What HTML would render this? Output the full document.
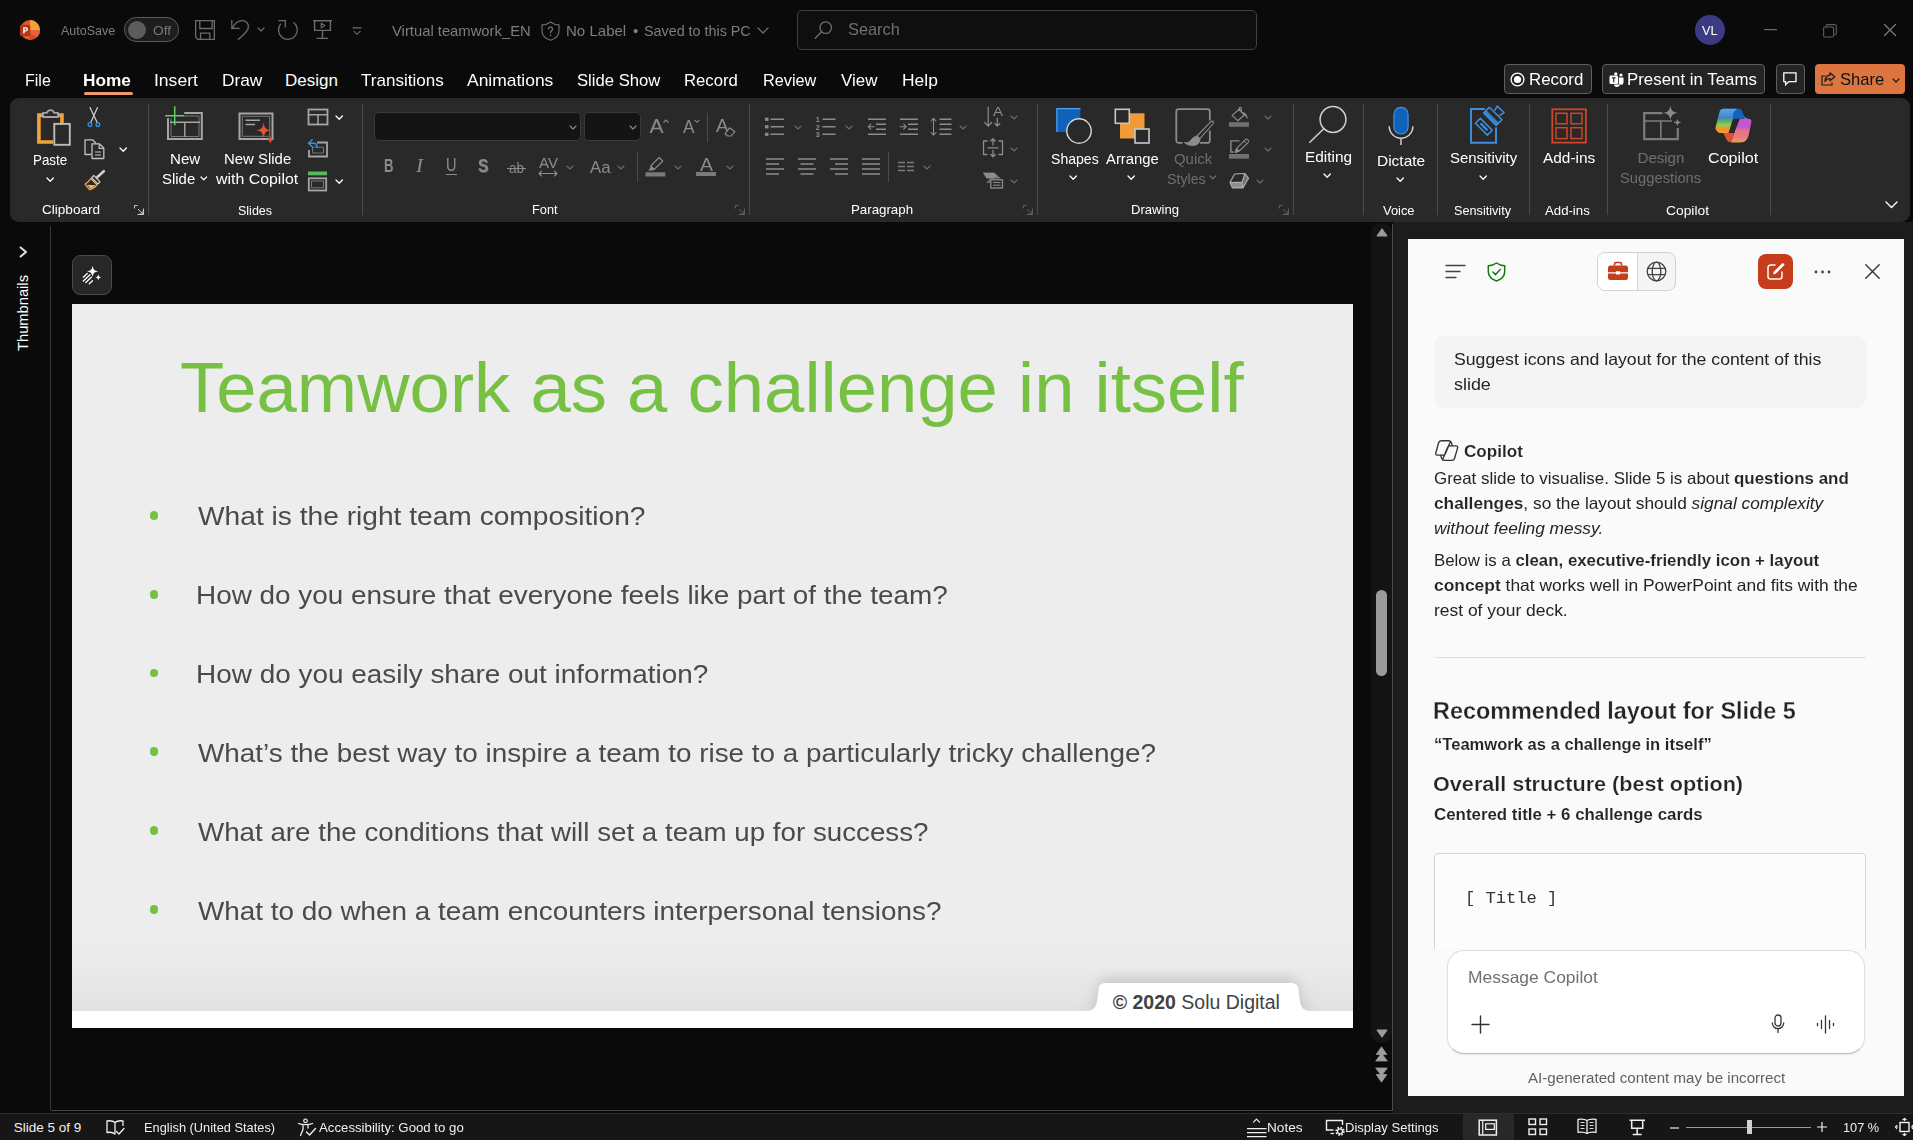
<!DOCTYPE html>
<html><head><meta charset="utf-8"><title>PowerPoint</title>
<style>
html,body{margin:0;padding:0;background:#0a0a0a;overflow:hidden;}
body{width:1913px;height:1140px;position:relative;overflow:hidden;font-family:"Liberation Sans",sans-serif;}
.t{position:absolute;white-space:nowrap;transform-origin:0 50%;line-height:1;}
.m{font-family:"Liberation Mono",monospace;}
svg{overflow:visible}
.sc{font-weight:bold;-webkit-text-stroke:.006em #fafafa;}
.sb{font-weight:bold;-webkit-text-stroke:.012em #fafafa;}
</style></head><body>
<svg style="position:absolute;left:19.8px;top:19.8px;" width="20" height="20" viewBox="0 0 20 20" fill="none"><circle cx="10" cy="10" r="10" fill="#e4572e"/>
<path d="M10 0A10 10 0 0 1 20 10H10Z" fill="#f2a23a"/>
<path d="M20 10A10 10 0 0 1 10 20V10Z" fill="#d04a24"/>
<path d="M10 10H20A10 10 0 0 1 17 17L10 14Z" fill="#e8633a"/>
<rect x="0" y="4.800" width="10.300" height="11.200" rx="1.200" fill="#b5351a"/>
<path d="M3.200 7.300h2.500c1.500 0 2.300.8 2.300 2s-.9 2.100-2.400 2.100H4.600v2.100H3.200Zm1.400 1.100v1.900h.9c.7 0 1.100-.3 1.100-1s-.4-.9-1.100-.9Z" fill="#fff"/></svg>
<span class="t" style="left:60.52px;top:24.0px;font-size:13px;color:#7e7e7e;transform:scaleX(0.9621);">AutoSave</span>
<div style="position:absolute;left:124.2px;top:17.2px;width:54.6px;height:24.4px;box-sizing:border-box;border:1px solid #5c5c5c;border-radius:12.2px;background:#1d1d1d"></div>
<div style="position:absolute;left:128.2px;top:20.6px;width:18px;height:18px;border-radius:50%;background:#5c5c5c"></div>
<span class="t" style="left:153.22px;top:24.0px;font-size:13px;color:#787878;transform:scaleX(1.0544);">Off</span>
<svg style="position:absolute;left:194.9px;top:19.9px;" width="20" height="20" viewBox="0 0 20 20" fill="none"><path d="M.65 .65H19.350V19.350H3L.65 17Z M4.800 .65V8.500H17.200V.65 M5.500 19.350V13.200H14.800V19.350" stroke="#6c6c6c" stroke-width="1.300" stroke-linejoin="miter"/></svg>
<svg style="position:absolute;left:230.9px;top:19.9px;" width="19" height="21" viewBox="0 0 19 21" fill="none"><path d="M.8 0V8.400H8.700 M1.300 8C4 3 8 .4 12 .7C16 1 18.500 5 17 9C16 12 11 16 6.800 19.800" stroke="#6c6c6c" stroke-width="1.300" stroke-linejoin="miter"/></svg>
<svg style="position:absolute;left:257.3px;top:27.1px;" width="8" height="5.5" viewBox="0 0 8 5.5" fill="none"><path d="M1 1 L4 4 L7 1" stroke="#6c6c6c" stroke-width="1.2" stroke-linecap="round" stroke-linejoin="round"/></svg>
<svg style="position:absolute;left:277.9px;top:19.9px;" width="20" height="20" viewBox="0 0 20 20" fill="none"><path d="M15.300 2.200A9.400 9.400 0 1 1 2.800 3.740 M.3 .6H7.300V7.600" stroke="#6c6c6c" stroke-width="1.300"/></svg>
<svg style="position:absolute;left:313px;top:19.9px;" width="20" height="20" viewBox="0 0 20 20" fill="none"><path d="M0 .7H19 M1.600 .7V10.400H17.400V.7 M9.500 10.400V18 M3.500 18.400H15" stroke="#6c6c6c" stroke-width="1.400"/><path d="M8.200 3.300V7.800L12 5.550Z" stroke="#6c6c6c" stroke-width="1.100" stroke-linejoin="round"/></svg>
<svg style="position:absolute;left:352.2px;top:26.5px;" width="10" height="9" viewBox="0 0 10 9" fill="none"><path d="M.5 .9H9.500 M1.500 3.800L5 7.300L8.500 3.800" stroke="#6c6c6c" stroke-width="1.100"/></svg>
<span class="t" style="left:392.1px;top:23.0px;font-size:15px;color:#7e7e7e;transform:scaleX(0.9863);">Virtual teamwork_EN</span>
<svg style="position:absolute;left:541px;top:20.5px;" width="19" height="20" viewBox="0 0 19 20" fill="none"><path d="M9.5 1C12 3 15 3.8 18 3.8V10C18 14.5 14.5 17.6 9.5 19.3C4.500 17.6 1 14.5 1 10V3.8C4 3.8 7 3 9.500 1Z" stroke="#6c6c6c" stroke-width="1.2" stroke-linejoin="round"/><path d="M7.5 8A2 2 0 1 1 10.6 9.7C9.800 10.3 9.500 10.7 9.500 11.800" stroke="#7e7e7e" stroke-width="1.2" stroke-linecap="round"/><circle cx="9.5" cy="14.3" r=".8" fill="#7e7e7e"/></svg>
<span class="t" style="left:565.6px;top:23.0px;font-size:15px;color:#7e7e7e;transform:scaleX(1.0026);">No Label</span>
<span class="t" style="left:633px;top:23.0px;font-size:15px;color:#7e7e7e;">•</span>
<span class="t" style="left:644.1px;top:23.0px;font-size:15px;color:#7e7e7e;transform:scaleX(0.9549);">Saved to this PC</span>
<svg style="position:absolute;left:756.8px;top:27.0px;" width="12" height="7.5" viewBox="0 0 12 7.5" fill="none"><path d="M1 1 L6 6 L11 1" stroke="#6c6c6c" stroke-width="1.3" stroke-linecap="round" stroke-linejoin="round"/></svg>
<div style="position:absolute;left:797px;top:10px;width:460px;height:40px;box-sizing:border-box;border:1px solid #404040;border-radius:5px;background:#0f0f0f"></div>
<svg style="position:absolute;left:814px;top:20px;" width="19" height="19" viewBox="0 0 19 19" fill="none"><circle cx="11.700" cy="7.600" r="5.800" stroke="#6c6c6c" stroke-width="1.300"/><path d="M7.600 11.700L1.200 18.200" stroke="#6c6c6c" stroke-width="1.300" stroke-linecap="round"/></svg>
<span class="t" style="left:848.01px;top:21.2px;font-size:16.5px;color:#707070;transform:scaleX(0.9912);">Search</span>
<div style="position:absolute;left:1694.5px;top:15px;width:30px;height:30px;border-radius:50%;background:#3c3a82"></div>
<span class="t" style="left:1702px;top:25.0px;font-size:12px;color:#fff;transform:scaleX(1.0553);">VL</span>
<svg style="position:absolute;left:1764px;top:28.5px;" width="13" height="1.4" viewBox="0 0 13 1.4" fill="none"><rect width="13" height="1.2" fill="#6d6d6d"/></svg>
<svg style="position:absolute;left:1823px;top:23.5px;" width="14" height="14" viewBox="0 0 14 14" fill="none"><rect x=".6" y="3" width="10" height="10" rx="1.5" stroke="#5d5d5d" stroke-width="1.1"/><path d="M3.2 3V2A1.500 1.500 0 0 1 4.700 .6H11.500A1.800 1.800 0 0 1 13.300 2.400V9.300A1.500 1.500 0 0 1 11.800 10.800H10.800" stroke="#5d5d5d" stroke-width="1.1"/></svg>
<svg style="position:absolute;left:1884.2px;top:24px;" width="12" height="12" viewBox="0 0 12 12" fill="none"><path d="M.5 .5L11.500 11.500 M11.500 .5L.5 11.500" stroke="#7c7c7c" stroke-width="1.200" stroke-linecap="round"/></svg>
<span class="t" style="left:24.98px;top:72.0px;font-size:17px;color:#fff;transform:scaleX(0.9436);">File</span>
<span class="t" style="left:83.48px;top:72.0px;font-size:17px;color:#fff;transform:scaleX(1.0132);"><b>Home</b></span>
<span class="t" style="left:153.98px;top:72.0px;font-size:17px;color:#fff;transform:scaleX(1.0312);">Insert</span>
<span class="t" style="left:221.98px;top:72.0px;font-size:17px;color:#fff;transform:scaleX(1.0173);">Draw</span>
<span class="t" style="left:284.98px;top:72.0px;font-size:17px;color:#fff;">Design</span>
<span class="t" style="left:360.98px;top:72.0px;font-size:17px;color:#fff;transform:scaleX(1.0042);">Transitions</span>
<span class="t" style="left:466.98px;top:72.0px;font-size:17px;color:#fff;transform:scaleX(1.0268);">Animations</span>
<span class="t" style="left:576.98px;top:72.0px;font-size:17px;color:#fff;transform:scaleX(0.9800);">Slide Show</span>
<span class="t" style="left:683.98px;top:72.0px;font-size:17px;color:#fff;transform:scaleX(0.9826);">Record</span>
<span class="t" style="left:762.98px;top:72.0px;font-size:17px;color:#fff;transform:scaleX(0.9571);">Review</span>
<span class="t" style="left:841.48px;top:72.0px;font-size:17px;color:#fff;transform:scaleX(0.9949);">View</span>
<span class="t" style="left:901.98px;top:72.0px;font-size:17px;color:#fff;transform:scaleX(1.0255);">Help</span>
<div style="position:absolute;left:84px;top:92px;width:49px;height:3px;background:#ec9a6e;border-radius:1.5px"></div>
<div style="position:absolute;left:1504px;top:63.9px;width:88px;height:30.1px;box-sizing:border-box;border:1px solid #5f5f5f;border-radius:4px;background:#242424"></div>
<svg style="position:absolute;left:1510px;top:72px;" width="15" height="15" viewBox="0 0 15 15" fill="none"><circle cx="7.5" cy="7.5" r="6.4" stroke="#fff" stroke-width="1.3"/><circle cx="7.500" cy="7.500" r="3.600" fill="#fff"/></svg>
<span class="t" style="left:1528.98px;top:71.0px;font-size:17px;color:#fff;transform:scaleX(0.9917);">Record</span>
<div style="position:absolute;left:1602px;top:63.9px;width:163px;height:30.1px;box-sizing:border-box;border:1px solid #5f5f5f;border-radius:4px;background:#242424"></div>
<svg style="position:absolute;left:1608.5px;top:72px;" width="15" height="15" viewBox="0 0 15 15" fill="none"><rect x=".5" y="3.5" width="8.500" height="8.500" rx="1.200" fill="#fff"/><path d="M3 5.800H6.500M4.750 5.800V10.300" stroke="#242424" stroke-width="1.200"/><circle cx="6.800" cy="1.800" r="1.600" fill="#fff"/><circle cx="12" cy="3" r="1.600" fill="#fff"/><path d="M10 5.500H14.500V10.500A2.250 2.250 0 0 1 10 10.500Z" fill="#fff"/><path d="M5 13V12.500H9.800V5.500H10.500V11A2.750 2.750 0 0 1 5 13Z" fill="#fff"/></svg>
<span class="t" style="left:1626.98px;top:71.0px;font-size:17px;color:#fff;transform:scaleX(0.9911);">Present in Teams</span>
<div style="position:absolute;left:1775.5px;top:63.9px;width:29.3px;height:30.1px;box-sizing:border-box;border:1px solid #5f5f5f;border-radius:4px;background:#242424"></div>
<svg style="position:absolute;left:1782.8px;top:72px;" width="14" height="14" viewBox="0 0 14 14" fill="none"><path d="M.8 .8H13V9.600H5.800L2.600 12.800V9.600H.8Z" stroke="#fff" stroke-width="1.300" stroke-linejoin="miter"/></svg>
<div style="position:absolute;left:1815px;top:64px;width:90px;height:30px;border-radius:4px;background:#dc7540"></div>
<svg style="position:absolute;left:1821px;top:72px;" width="15" height="14" viewBox="0 0 15 14" fill="none"><path d="M4.500 4H1V13H11V10.500" stroke="#1a1a1a" stroke-width="1.200"/><path d="M9 .8L13.800 4.800L9 8.800V6.500C6.500 6.500 5 7.500 4 9.500C4.200 5.800 6 3.500 9 3.200Z" stroke="#1a1a1a" stroke-width="1.200" stroke-linejoin="round"/></svg>
<span class="t" style="left:1839.98px;top:71.0px;font-size:17px;color:#111;transform:scaleX(0.9776);">Share</span>
<svg style="position:absolute;left:1892px;top:77.5px;" width="8" height="5.5" viewBox="0 0 8 5.5" fill="none"><path d="M1 1 L4 4 L7 1" stroke="#1a1a1a" stroke-width="1.2" stroke-linecap="round" stroke-linejoin="round"/></svg>
<div style="position:absolute;left:10px;top:98px;width:1900px;height:123.7px;background:#292929;border-radius:9px"></div>
<svg style="position:absolute;left:35px;top:106px;" width="38" height="42" viewBox="0 0 38 42" fill="none"><path d="M8 9.100H3.900V35.950H18" stroke="#f1a23a" stroke-width="3.600" stroke-linejoin="miter"/>
<path d="M22 9.100H26.950V17" stroke="#f1a23a" stroke-width="3.600"/>
<path d="M8 11V6.800H12A3.600 3.600 0 0 1 19 6.800H23V11Z" stroke="#a4a4a4" stroke-width="1.800" fill="#292929" stroke-linejoin="round"/>
<rect x="19.300" y="17.900" width="15.500" height="20.900" stroke="#bdbdbd" stroke-width="1.900" fill="#292929"/></svg>
<span class="t" style="left:33.1px;top:152.0px;font-size:15px;color:#fff;transform:scaleX(0.8916);">Paste</span>
<svg style="position:absolute;left:45.8px;top:176.9px;" width="8.4" height="5.7" viewBox="0 0 8.4 5.7" fill="none"><path d="M1 1 L4.2 4.2 L7.4 1" stroke="#fff" stroke-width="1.3" stroke-linecap="round" stroke-linejoin="round"/></svg>
<svg style="position:absolute;left:87px;top:107px;" width="15" height="21" viewBox="0 0 15 21" fill="none"><path d="M3 .5L10.300 15.800 M10.500 .5L3.600 15.800" stroke="#d4d4d4" stroke-width="1.200" stroke-linecap="round"/>
<circle cx="3" cy="17.600" r="1.900" stroke="#3b8ede" stroke-width="1.300"/><circle cx="10.900" cy="17.600" r="1.900" stroke="#3b8ede" stroke-width="1.300"/></svg>
<svg style="position:absolute;left:84px;top:139px;" width="21" height="21" viewBox="0 0 21 21" fill="none"><path d="M7 15.500H1V.8H8.500L12 4.300" stroke="#c2c2c2" stroke-width="1.300" stroke-linejoin="round"/>
<path d="M8 4.800H15.500L19.800 9V19.500H8Z" stroke="#c2c2c2" stroke-width="1.300" fill="#292929" stroke-linejoin="round"/><path d="M15.200 5V9.300H19.500 M11 13H17 M11 16H17" stroke="#c2c2c2" stroke-width="1.200"/></svg>
<svg style="position:absolute;left:119.2px;top:146.9px;" width="8.4" height="5.7" viewBox="0 0 8.4 5.7" fill="none"><path d="M1 1 L4.2 4.2 L7.4 1" stroke="#fff" stroke-width="1.3" stroke-linecap="round" stroke-linejoin="round"/></svg>
<svg style="position:absolute;left:84px;top:170px;" width="22" height="21" viewBox="0 0 22 21" fill="none"><path d="M19.800 1.200L13.200 7.200" stroke="#d0d0d0" stroke-width="2.600" stroke-linecap="round"/>
<path d="M9.800 5.500L16 11.800L13.800 14L7.600 7.700Z" stroke="#d0d0d0" stroke-width="1.200" stroke-linejoin="round"/>
<path d="M6.800 8.500L13 14.800C11 17.500 8.500 19 5.500 19.600L1 14.200C3.500 12.500 5.500 10.800 6.800 8.500Z" stroke="#f2b25e" stroke-width="1.200" stroke-linejoin="round"/>
<path d="M3 14.800L6.200 18.600C8.200 18 10 16.800 11.500 15.200Z" fill="#f2b25e"/></svg>
<span class="t" style="left:41.72px;top:203.0px;font-size:13px;color:#fff;transform:scaleX(1.0428);">Clipboard</span>
<svg style="position:absolute;left:134px;top:205px;" width="10" height="10" viewBox="0 0 10 10" fill="none"><path d="M0.5 3.5V0.5H3.5 M9.5 3.5V9.5H3.5 M4 4L9 9 M9 5.5V9H5.5" stroke="#c8c8c8" stroke-width="1"/></svg>
<div style="position:absolute;left:148px;top:104px;width:1px;height:111px;background:#4a4a4a"></div>
<svg style="position:absolute;left:165px;top:105px;" width="39" height="36" viewBox="0 0 39 36" fill="none"><path d="M19.300 8H36.800V34H3V13.300" stroke="#a6a6a6" stroke-width="2"/>
<path d="M19.300 11H34V31.500H6V13.300" stroke="#777" stroke-width="1"/>
<path d="M5 17.300H35 M19.800 17.300V32" stroke="#a6a6a6" stroke-width="1.400"/>
<path d="M9.700 1.300V20.200 M.2 10.700H19.200" stroke="#5fd068" stroke-width="1.500"/></svg>
<span class="t" style="left:169.6px;top:150.5px;font-size:15px;color:#fff;transform:scaleX(1.0061);">New</span>
<span class="t" style="left:161.6px;top:170.5px;font-size:15px;color:#fff;transform:scaleX(0.9952);">Slide</span>
<svg style="position:absolute;left:199.5px;top:175.6px;" width="7.6" height="5.3" viewBox="0 0 7.6 5.3" fill="none"><path d="M1 1 L3.8 3.8 L6.6 1" stroke="#fff" stroke-width="1.2" stroke-linecap="round" stroke-linejoin="round"/></svg>
<svg style="position:absolute;left:238px;top:112px;" width="38" height="32" viewBox="0 0 38 32" fill="none"><rect x="1.500" y="1.500" width="33" height="25.500" stroke="#a6a6a6" stroke-width="2"/>
<rect x="4.300" y="4.300" width="27.400" height="20" stroke="#777" stroke-width="1"/>
<path d="M7.500 8.200H22 M7.500 12.600H17" stroke="#a6a6a6" stroke-width="1.500"/>
<path d="M25.600 10.400C26.400 16 28 17.600 33.200 18.300C28 19 26.400 20.600 25.600 26.200C24.800 20.600 23.200 19 18 18.300C23.200 17.600 24.800 16 25.600 10.400Z" fill="#e2542f"/>
<path d="M32.400 23.500C32.900 26.400 33.700 27.200 36.600 27.700C33.700 28.200 32.900 29 32.400 31.900C31.900 29 31.100 28.200 28.200 27.700C31.100 27.200 31.900 26.400 32.400 23.500Z" fill="#e2542f"/></svg>
<span class="t" style="left:223.6px;top:150.5px;font-size:15px;color:#fff;transform:scaleX(0.9951);">New Slide</span>
<span class="t" style="left:216.1px;top:170.5px;font-size:15px;color:#fff;transform:scaleX(1.0600);">with Copilot</span>
<svg style="position:absolute;left:307px;top:107.5px;" width="22" height="18" viewBox="0 0 22 18" fill="none"><rect x="1.500" y="1.500" width="19" height="15" stroke="#a6a6a6" stroke-width="1.800"/><path d="M2 6.700H20 M11 6.700V16" stroke="#a6a6a6" stroke-width="1.500"/></svg>
<svg style="position:absolute;left:335.3px;top:114.9px;" width="8.4" height="5.7" viewBox="0 0 8.4 5.7" fill="none"><path d="M1 1 L4.2 4.2 L7.4 1" stroke="#fff" stroke-width="1.3" stroke-linecap="round" stroke-linejoin="round"/></svg>
<svg style="position:absolute;left:307px;top:138.5px;" width="22" height="19" viewBox="0 0 22 19" fill="none"><path d="M10 3.500H20V17.500H2V11" stroke="#a6a6a6" stroke-width="1.800"/><path d="M5.500 8.200H16.500V14H5.500Z" stroke="#777" stroke-width="1"/>
<path d="M5.200 .8L1.500 4.300L5.200 7.800 M2 4.300H6.500C9 4.300 10 6 10 8.300" stroke="#3b8ede" stroke-width="1.500" stroke-linecap="round" stroke-linejoin="round"/></svg>
<svg style="position:absolute;left:307px;top:170.5px;" width="21" height="21" viewBox="0 0 21 21" fill="none"><rect x="1" y=".5" width="19" height="3.800" fill="#57b85c"/><rect x="1.800" y="7.300" width="17.400" height="12.200" stroke="#a6a6a6" stroke-width="1.800"/><rect x="4.500" y="10" width="12" height="6.800" stroke="#777" stroke-width="1"/></svg>
<svg style="position:absolute;left:335.3px;top:178.9px;" width="8.4" height="5.7" viewBox="0 0 8.4 5.7" fill="none"><path d="M1 1 L4.2 4.2 L7.4 1" stroke="#fff" stroke-width="1.3" stroke-linecap="round" stroke-linejoin="round"/></svg>
<span class="t" style="left:237.72px;top:204.0px;font-size:13px;color:#fff;transform:scaleX(0.9610);">Slides</span>
<div style="position:absolute;left:362px;top:104px;width:1px;height:111px;background:#4a4a4a"></div>
<div style="position:absolute;left:373.5px;top:112.3px;width:207px;height:29.2px;box-sizing:border-box;border:1px solid #383838;border-radius:5px;background:#141414"></div>
<svg style="position:absolute;left:569.3px;top:124.9px;" width="8" height="5.5" viewBox="0 0 8 5.5" fill="none"><path d="M1 1 L4 4 L7 1" stroke="#8c8c8c" stroke-width="1.1" stroke-linecap="round" stroke-linejoin="round"/></svg>
<div style="position:absolute;left:583.5px;top:112.3px;width:57px;height:29.2px;box-sizing:border-box;border:1px solid #383838;border-radius:5px;background:#141414"></div>
<svg style="position:absolute;left:628.9px;top:124.9px;" width="8" height="5.5" viewBox="0 0 8 5.5" fill="none"><path d="M1 1 L4 4 L7 1" stroke="#8c8c8c" stroke-width="1.1" stroke-linecap="round" stroke-linejoin="round"/></svg>
<span class="t" style="left:649.5px;top:115.0px;font-size:21px;color:#8c8c8c;">A</span>
<svg style="position:absolute;left:662.5px;top:118.5px;" width="6" height="4" viewBox="0 0 6 4" fill="none"><path d="M.5 3.500L3 1L5.500 3.500" stroke="#8c8c8c" stroke-width="1.100"/></svg>
<span class="t" style="left:683px;top:119.2px;font-size:17.5px;color:#8c8c8c;transform:scaleX(0.9840);">A</span>
<svg style="position:absolute;left:694px;top:118.5px;" width="6" height="4" viewBox="0 0 6 4" fill="none"><path d="M.5 .8L3 3.300L5.500 .8" stroke="#8c8c8c" stroke-width="1.100"/></svg>
<div style="position:absolute;left:707px;top:113px;width:1px;height:28.5px;background:#4a4a4a"></div>
<span class="t" style="left:715.5px;top:115.5px;font-size:19px;color:#8c8c8c;transform:scaleX(0.9852);">A</span>
<svg style="position:absolute;left:723.5px;top:126.5px;" width="12" height="10" viewBox="0 0 12 10" fill="none"><path d="M5.500 .8L10.800 4.500L7.200 9H3.800L1 7Z" stroke="#8c8c8c" stroke-width="1.200" fill="#292929" stroke-linejoin="round"/></svg>
<span class="t" style="left:383.5px;top:155.9px;font-size:19px;color:#8c8c8c;transform:scaleX(0.6917);"><b>B</b></span>
<span class="t" style="left:416px;top:155.9px;font-size:19px;color:#8c8c8c;transform:scaleX(1.1062);font-family:'Liberation Serif',serif;"><i>I</i></span>
<span class="t" style="left:446px;top:157.2px;font-size:17.5px;color:#8c8c8c;transform:scaleX(0.8307);">U</span>
<div style="position:absolute;left:445.5px;top:174px;width:11.5px;height:1.3px;background:#8c8c8c"></div>
<span class="t" style="left:478px;top:156.1px;font-size:19px;color:#8c8c8c;transform:scaleX(0.8276);text-shadow:1px 1px 0 #5a5a5a;"><b>S</b></span>
<span class="t" style="left:508.5px;top:160.0px;font-size:15px;color:#8c8c8c;transform:scaleX(0.8989);">ab</span>
<div style="position:absolute;left:506.5px;top:167.5px;width:19.5px;height:1.2px;background:#8c8c8c"></div>
<span class="t" style="left:538.5px;top:154.9px;font-size:15.5px;color:#8c8c8c;transform:scaleX(0.9728);">AV</span>
<svg style="position:absolute;left:538px;top:170px;" width="20" height="7" viewBox="0 0 20 7" fill="none"><path d="M1 3.500H19 M3.500 1L1 3.500L3.500 6 M16.500 1L19 3.500L16.500 6" stroke="#8c8c8c" stroke-width="1.100" stroke-linecap="round" stroke-linejoin="round"/></svg>
<svg style="position:absolute;left:565.5px;top:165.0px;" width="8" height="5.5" viewBox="0 0 8 5.5" fill="none"><path d="M1 1 L4 4 L7 1" stroke="#6c6c6c" stroke-width="1.1" stroke-linecap="round" stroke-linejoin="round"/></svg>
<span class="t" style="left:590px;top:159.0px;font-size:17px;color:#8c8c8c;transform:scaleX(0.9857);">Aa</span>
<svg style="position:absolute;left:617.4px;top:165.0px;" width="8" height="5.5" viewBox="0 0 8 5.5" fill="none"><path d="M1 1 L4 4 L7 1" stroke="#6c6c6c" stroke-width="1.1" stroke-linecap="round" stroke-linejoin="round"/></svg>
<div style="position:absolute;left:637px;top:152px;width:1px;height:29.5px;background:#4a4a4a"></div>
<svg style="position:absolute;left:645px;top:156px;" width="21" height="21" viewBox="0 0 21 21" fill="none"><path d="M14.200 1.500L17.700 5L9.300 13.400L5.800 9.900Z" stroke="#8c8c8c" stroke-width="1.200" stroke-linejoin="round"/><path d="M5.800 9.900L9.300 13.400L7.800 14.400H3L5 12.400Z" fill="#8c8c8c"/><rect x=".5" y="16.300" width="19.800" height="4.200" fill="#7a7a7a"/></svg>
<svg style="position:absolute;left:674.2px;top:165.0px;" width="8" height="5.5" viewBox="0 0 8 5.5" fill="none"><path d="M1 1 L4 4 L7 1" stroke="#6c6c6c" stroke-width="1.1" stroke-linecap="round" stroke-linejoin="round"/></svg>
<span class="t" style="left:699.5px;top:154.5px;font-size:19px;color:#8c8c8c;transform:scaleX(1.0246);">A</span>
<div style="position:absolute;left:696px;top:172.3px;width:19.8px;height:4.2px;background:#7a7a7a"></div>
<svg style="position:absolute;left:725.5px;top:165.0px;" width="8" height="5.5" viewBox="0 0 8 5.5" fill="none"><path d="M1 1 L4 4 L7 1" stroke="#6c6c6c" stroke-width="1.1" stroke-linecap="round" stroke-linejoin="round"/></svg>
<span class="t" style="left:532.22px;top:203.0px;font-size:13px;color:#fff;transform:scaleX(0.9817);">Font</span>
<svg style="position:absolute;left:735px;top:205px;" width="10" height="10" viewBox="0 0 10 10" fill="none"><path d="M0.5 3.5V0.5H3.5 M9.5 3.5V9.5H3.5 M4 4L9 9 M9 5.5V9H5.5" stroke="#5e5e5e" stroke-width="1"/></svg>
<div style="position:absolute;left:749px;top:104px;width:1px;height:111px;background:#4a4a4a"></div>
<svg style="position:absolute;left:764px;top:117px;" width="22" height="20" viewBox="0 0 22 20" fill="none"><path d="M6.5 2.2H20 M6.5 9.7H20 M6.5 17.2H20 " stroke="#8c8c8c" stroke-width="1.5"/><rect x="1" y=".7" width="3.500" height="3.200" fill="#8c8c8c"/><rect x="1" y="8.200" width="3.500" height="3.200" fill="#8c8c8c"/><rect x="1" y="15.700" width="3.500" height="3.200" fill="#8c8c8c"/></svg>
<svg style="position:absolute;left:794.3px;top:124.8px;" width="8" height="5.5" viewBox="0 0 8 5.5" fill="none"><path d="M1 1 L4 4 L7 1" stroke="#6c6c6c" stroke-width="1.1" stroke-linecap="round" stroke-linejoin="round"/></svg>
<svg style="position:absolute;left:815px;top:117px;" width="22" height="20" viewBox="0 0 22 20" fill="none"><path d="M7.5 2.2H20.5 M7.5 9.7H20.5 M7.5 17.2H20.5 " stroke="#8c8c8c" stroke-width="1.5"/></svg>
<span class="t" style="left:815.8px;top:116.0px;font-size:7px;color:#8c8c8c;font-weight:bold;">1</span>
<span class="t" style="left:815.8px;top:123.5px;font-size:7px;color:#8c8c8c;font-weight:bold;">2</span>
<span class="t" style="left:815.8px;top:131.0px;font-size:7px;color:#8c8c8c;font-weight:bold;">3</span>
<svg style="position:absolute;left:845.4px;top:124.8px;" width="8" height="5.5" viewBox="0 0 8 5.5" fill="none"><path d="M1 1 L4 4 L7 1" stroke="#6c6c6c" stroke-width="1.1" stroke-linecap="round" stroke-linejoin="round"/></svg>
<svg style="position:absolute;left:867px;top:117px;" width="22" height="20" viewBox="0 0 22 20" fill="none"><path d="M1 2.2H19 M9 7.2H19 M9 12.2H19 M1 17.2H19 " stroke="#8c8c8c" stroke-width="1.5"/><path d="M1.500 9.700H7.200 M3.800 7.200L1.300 9.700L3.800 12.200" stroke="#8c8c8c" stroke-width="1.100" stroke-linecap="round" stroke-linejoin="round"/></svg>
<svg style="position:absolute;left:899px;top:117px;" width="22" height="20" viewBox="0 0 22 20" fill="none"><path d="M1 2.2H19 M9 7.2H19 M9 12.2H19 M1 17.2H19 " stroke="#8c8c8c" stroke-width="1.5"/><path d="M1.300 9.700H7 M4.700 7.200L7.200 9.700L4.700 12.200" stroke="#8c8c8c" stroke-width="1.100" stroke-linecap="round" stroke-linejoin="round"/></svg>
<svg style="position:absolute;left:930px;top:117px;" width="22" height="20" viewBox="0 0 22 20" fill="none"><path d="M9.5 2.2H21.5 M9.5 7.2H21.5 M9.5 12.2H21.5 M9.5 17.2H21.5 " stroke="#8c8c8c" stroke-width="1.5"/><path d="M3.500 1.500V18 M1 4L3.500 1.300L6 4 M1 15.500L3.500 18.200L6 15.500" stroke="#8c8c8c" stroke-width="1.100" stroke-linecap="round" stroke-linejoin="round"/></svg>
<svg style="position:absolute;left:958.5px;top:124.8px;" width="8" height="5.5" viewBox="0 0 8 5.5" fill="none"><path d="M1 1 L4 4 L7 1" stroke="#6c6c6c" stroke-width="1.1" stroke-linecap="round" stroke-linejoin="round"/></svg>
<svg style="position:absolute;left:765px;top:157px;" width="22" height="20" viewBox="0 0 22 20" fill="none"><path d="M1 2H19 M1 7H14 M1 12H19 M1 17H14 " stroke="#8c8c8c" stroke-width="1.5"/></svg>
<svg style="position:absolute;left:797px;top:157px;" width="22" height="20" viewBox="0 0 22 20" fill="none"><path d="M1 2H19 M3.5 7H16.5 M1 12H19 M3.5 17H16.5 " stroke="#8c8c8c" stroke-width="1.5"/></svg>
<svg style="position:absolute;left:829px;top:157px;" width="22" height="20" viewBox="0 0 22 20" fill="none"><path d="M1 2H19 M6 7H19 M1 12H19 M6 17H19 " stroke="#8c8c8c" stroke-width="1.5"/></svg>
<svg style="position:absolute;left:861px;top:157px;" width="22" height="20" viewBox="0 0 22 20" fill="none"><path d="M1 2H19 M1 7H19 M1 12H19 M1 17H19 " stroke="#8c8c8c" stroke-width="1.5"/></svg>
<div style="position:absolute;left:888px;top:152px;width:1px;height:30px;background:#4a4a4a"></div>
<svg style="position:absolute;left:897px;top:157px;" width="22" height="20" viewBox="0 0 22 20" fill="none"><path d="M1 5.5H8 M10 5.5H17 M1 9.5H8 M10 9.5H17 M1 13.5H8 M10 13.5H17 " stroke="#7a7a7a" stroke-width="1.5"/></svg>
<svg style="position:absolute;left:923.4px;top:165.0px;" width="8" height="5.5" viewBox="0 0 8 5.5" fill="none"><path d="M1 1 L4 4 L7 1" stroke="#6c6c6c" stroke-width="1.1" stroke-linecap="round" stroke-linejoin="round"/></svg>
<svg style="position:absolute;left:984px;top:106px;" width="20" height="22" viewBox="0 0 20 22" fill="none"><path d="M4.200 1V20 M.8 16.500L4.200 20.200L7.600 16.500 M13.300 12V20 M10.800 17.500L13.300 20.200L15.800 17.500" stroke="#8c8c8c" stroke-width="1.200" stroke-linecap="round" stroke-linejoin="round"/></svg>
<span class="t" style="left:993px;top:104.5px;font-size:13px;color:#8c8c8c;transform:scaleX(1.1532);">A</span>
<svg style="position:absolute;left:1010.4px;top:115.1px;" width="8" height="5.5" viewBox="0 0 8 5.5" fill="none"><path d="M1 1 L4 4 L7 1" stroke="#6c6c6c" stroke-width="1.1" stroke-linecap="round" stroke-linejoin="round"/></svg>
<svg style="position:absolute;left:982px;top:138px;" width="22" height="20" viewBox="0 0 22 20" fill="none"><path d="M5 3H1.500V16.500H5 M17 3H20.500V16.500H17 M6 9.800H16 M11 1V7 M11 12.500V18.500 M8.800 3L11 .8L13.200 3 M8.800 16.500L11 18.700L13.200 16.500" stroke="#8c8c8c" stroke-width="1.300" stroke-linecap="round" stroke-linejoin="round"/></svg>
<svg style="position:absolute;left:1010.4px;top:147.0px;" width="8" height="5.5" viewBox="0 0 8 5.5" fill="none"><path d="M1 1 L4 4 L7 1" stroke="#6c6c6c" stroke-width="1.1" stroke-linecap="round" stroke-linejoin="round"/></svg>
<svg style="position:absolute;left:982px;top:172px;" width="22" height="18" viewBox="0 0 22 18" fill="none"><path d="M1 .8H12L19 6.500H8Z" fill="#7c7c7c"/><path d="M1 .8H12L15.500 3.700L12 6.500H4.500Z" fill="#8c8c8c"/><path d="M8 6.500L4 11H8" fill="#6a6a6a"/><rect x="8.800" y="7.800" width="11.700" height="8.200" stroke="#8c8c8c" stroke-width="1.300" fill="#292929"/><path d="M11 10.500H18.500 M11 13.200H18.500" stroke="#8c8c8c" stroke-width="1"/></svg>
<svg style="position:absolute;left:1010.4px;top:179.0px;" width="8" height="5.5" viewBox="0 0 8 5.5" fill="none"><path d="M1 1 L4 4 L7 1" stroke="#6c6c6c" stroke-width="1.1" stroke-linecap="round" stroke-linejoin="round"/></svg>
<span class="t" style="left:851.22px;top:203.0px;font-size:13px;color:#fff;transform:scaleX(1.0218);">Paragraph</span>
<svg style="position:absolute;left:1023px;top:205px;" width="10" height="10" viewBox="0 0 10 10" fill="none"><path d="M0.5 3.5V0.5H3.5 M9.5 3.5V9.5H3.5 M4 4L9 9 M9 5.5V9H5.5" stroke="#5e5e5e" stroke-width="1"/></svg>
<div style="position:absolute;left:1037px;top:104px;width:1px;height:111px;background:#4a4a4a"></div>
<svg style="position:absolute;left:1055px;top:107px;" width="38" height="38" viewBox="0 0 38 38" fill="none"><rect x="1.300" y="1.100" width="24.100" height="24" fill="#1161b8"/><path d="M1.900 25.100V1.700H25.400" stroke="#4da3f5" stroke-width="1.200"/><circle cx="24" cy="24" r="12.200" fill="#292929" stroke="#d8d8d8" stroke-width="1.400"/></svg>
<span class="t" style="left:1050.6px;top:150.5px;font-size:15px;color:#fff;transform:scaleX(0.9376);">Shapes</span>
<svg style="position:absolute;left:1069.4px;top:174.6px;" width="8.4" height="5.7" viewBox="0 0 8.4 5.7" fill="none"><path d="M1 1 L4.2 4.2 L7.4 1" stroke="#fff" stroke-width="1.3" stroke-linecap="round" stroke-linejoin="round"/></svg>
<svg style="position:absolute;left:1113px;top:107px;" width="38" height="38" viewBox="0 0 38 38" fill="none"><rect x="7" y="6.300" width="24.500" height="25.200" fill="#f09a38"/><rect x="2.300" y="2.300" width="14" height="14" fill="#292929" stroke="#c8c8c8" stroke-width="1.600"/><rect x="22" y="22" width="14" height="14" fill="#292929" stroke="#c8c8c8" stroke-width="1.600"/></svg>
<span class="t" style="left:1106.2px;top:150.5px;font-size:15px;color:#fff;transform:scaleX(0.9892);">Arrange</span>
<svg style="position:absolute;left:1127.1px;top:174.6px;" width="8.4" height="5.7" viewBox="0 0 8.4 5.7" fill="none"><path d="M1 1 L4.2 4.2 L7.4 1" stroke="#fff" stroke-width="1.3" stroke-linecap="round" stroke-linejoin="round"/></svg>
<svg style="position:absolute;left:1174px;top:107px;" width="41" height="41" viewBox="0 0 41 41" fill="none"><rect x="2.300" y="2.200" width="33.500" height="33.700" rx="2.500" stroke="#8c8c8c" stroke-width="1.800"/><path d="M8.500 36H26 M36 13.500V23.500" stroke="#292929" stroke-width="3.200"/><path d="M38.900 14.300C39.800 15 39.500 16.300 38.500 17.500L25.800 31.700L23 29L36.500 15.200C37.500 14.200 38.300 13.900 38.900 14.300Z" stroke="#8c8c8c" stroke-width="1.100" fill="#292929" stroke-linejoin="round"/><path d="M23 29C19.500 29.500 17.500 32 16.500 33.500C15 35.500 12.500 36 10.200 35.500C13 38 18 39.500 22 38C25 36.800 26.500 34 25.800 31.700Z" fill="#8c8c8c" stroke="#8c8c8c" stroke-width=".8" stroke-linejoin="round"/></svg>
<span class="t" style="left:1173.6px;top:150.5px;font-size:15px;color:#6f6f6f;transform:scaleX(0.9963);">Quick</span>
<span class="t" style="left:1166.6px;top:170.8px;font-size:15px;color:#6f6f6f;transform:scaleX(0.9472);">Styles</span>
<svg style="position:absolute;left:1208.7px;top:175.4px;" width="7.6" height="5.3" viewBox="0 0 7.6 5.3" fill="none"><path d="M1 1 L3.8 3.8 L6.6 1" stroke="#6f6f6f" stroke-width="1.2" stroke-linecap="round" stroke-linejoin="round"/></svg>
<svg style="position:absolute;left:1228px;top:106px;" width="22" height="22" viewBox="0 0 22 22" fill="none"><path d="M11.200 3.200L16.200 9L9.900 14.800L4.100 9.400Z" stroke="#8c8c8c" stroke-width="1.200" stroke-linejoin="round"/><path d="M10.300 4.800L11.600 1.500Q12.500 .8 13.250 1.900V6.500" stroke="#8c8c8c" stroke-width="1.200" stroke-linejoin="round"/><path d="M15 6.200C17.800 7 19.300 9.500 19.200 12.500C18.300 10.500 17.300 9.500 15.800 8.800Z" fill="#8c8c8c" stroke="#8c8c8c" stroke-width=".6"/><rect x="1" y="16.200" width="20" height="4.600" fill="#717171"/></svg>
<svg style="position:absolute;left:1264px;top:115.1px;" width="8" height="5.5" viewBox="0 0 8 5.5" fill="none"><path d="M1 1 L4 4 L7 1" stroke="#6c6c6c" stroke-width="1.1" stroke-linecap="round" stroke-linejoin="round"/></svg>
<svg style="position:absolute;left:1228px;top:138px;" width="22" height="22" viewBox="0 0 22 22" fill="none"><path d="M11.500 2.900H2.900V14H5.800" stroke="#8c8c8c" stroke-width="1.400"/><path d="M17.600 1.300Q18.600 .7 19.600 1.700L20.300 2.400Q21.100 3.400 20.300 4.300L11.300 13L7.300 14.500L8.600 10.300Z" stroke="#8c8c8c" stroke-width="1.100" stroke-linejoin="round" fill="#292929"/><path d="M8.600 10.300L11.300 13L7.300 14.500Z M16 2.800L18.800 5.600" stroke="#8c8c8c" stroke-width="1" fill="#8c8c8c"/><rect x="1" y="16" width="20" height="4.700" fill="#717171"/></svg>
<svg style="position:absolute;left:1264px;top:147.0px;" width="8" height="5.5" viewBox="0 0 8 5.5" fill="none"><path d="M1 1 L4 4 L7 1" stroke="#6c6c6c" stroke-width="1.1" stroke-linecap="round" stroke-linejoin="round"/></svg>
<svg style="position:absolute;left:1228px;top:172px;" width="22" height="18" viewBox="0 0 22 18" fill="none"><path d="M2 10.500L14.100 10.100L14.900 15.900H4.500Z" fill="#a8a8a8" opacity=".8"/><path d="M17 1.500L20.600 6.300L14.900 15.900L14.100 10.100Z" fill="#8a8a8a" opacity=".75"/><path d="M6.600 2L17 1.500L20.600 6.300L14.900 15.900H4.500L2 10.500Z M2 10.500L14.100 10.100L17 1.500 M14.100 10.100L14.900 15.900" stroke="#b0b0b0" stroke-width="1.100" stroke-linejoin="round"/></svg>
<svg style="position:absolute;left:1256px;top:179.0px;" width="8" height="5.5" viewBox="0 0 8 5.5" fill="none"><path d="M1 1 L4 4 L7 1" stroke="#6c6c6c" stroke-width="1.1" stroke-linecap="round" stroke-linejoin="round"/></svg>
<span class="t" style="left:1130.72px;top:203.0px;font-size:13px;color:#fff;transform:scaleX(1.0074);">Drawing</span>
<svg style="position:absolute;left:1279px;top:205px;" width="10" height="10" viewBox="0 0 10 10" fill="none"><path d="M0.5 3.5V0.5H3.5 M9.5 3.5V9.5H3.5 M4 4L9 9 M9 5.5V9H5.5" stroke="#5e5e5e" stroke-width="1"/></svg>
<div style="position:absolute;left:1293px;top:104px;width:1px;height:111px;background:#4a4a4a"></div>
<svg style="position:absolute;left:1307.5px;top:105.2px;" width="39" height="39" viewBox="0 0 39 39" fill="none"><circle cx="25" cy="14.500" r="12.900" stroke="#d0d0d0" stroke-width="1.500"/><path d="M16 23.500L1.800 37.300" stroke="#d0d0d0" stroke-width="1.500" stroke-linecap="round"/></svg>
<span class="t" style="left:1304.7px;top:148.9px;font-size:15px;color:#fff;transform:scaleX(1.0267);">Editing</span>
<svg style="position:absolute;left:1323.2px;top:173.0px;" width="8.4" height="5.7" viewBox="0 0 8.4 5.7" fill="none"><path d="M1 1 L4.2 4.2 L7.4 1" stroke="#fff" stroke-width="1.3" stroke-linecap="round" stroke-linejoin="round"/></svg>
<div style="position:absolute;left:1363px;top:104px;width:1px;height:111px;background:#4a4a4a"></div>
<svg style="position:absolute;left:1388px;top:106px;" width="27" height="40" viewBox="0 0 27 40" fill="none"><rect x="5.900" y="1.400" width="14.200" height="26.600" rx="7.100" fill="#0f62ba" stroke="#4796e4" stroke-width="1.100"/><path d="M1.200 20.300A11.850 11.850 0 0 0 24.900 20.300 M13 32.200V39" stroke="#d0d0d0" stroke-width="1.500"/></svg>
<span class="t" style="left:1376.6px;top:152.5px;font-size:15px;color:#fff;transform:scaleX(1.0324);">Dictate</span>
<svg style="position:absolute;left:1396.1px;top:176.9px;" width="8.4" height="5.7" viewBox="0 0 8.4 5.7" fill="none"><path d="M1 1 L4.2 4.2 L7.4 1" stroke="#fff" stroke-width="1.3" stroke-linecap="round" stroke-linejoin="round"/></svg>
<span class="t" style="left:1383.22px;top:204.0px;font-size:13px;color:#fff;transform:scaleX(0.9914);">Voice</span>
<div style="position:absolute;left:1437px;top:104px;width:1px;height:111px;background:#4a4a4a"></div>
<svg style="position:absolute;left:1469px;top:105px;" width="37" height="40" viewBox="0 0 37 40" fill="none"><path d="M15.800 4H2V37.800H27V22.200" stroke="#3d8fe2" stroke-width="1.900"/><path d="M11.400 13.400L23.300 25.300L18.400 30.100L6.400 18.200Z" stroke="#3d8fe2" stroke-width="1.500" fill="#292929" stroke-linejoin="round"/><path d="M11.500 18.300L18.500 25.300" stroke="#3d8fe2" stroke-width="2.200"/><path d="M20.400 2.200L32.900 14.700L27.200 20.400L14.700 7.900Z" stroke="#3d8fe2" stroke-width="1.500" fill="#292929" stroke-linejoin="round"/><path d="M14.700 7.900L27.200 20.400L29.800 17.800L17.300 5.300Z" fill="#3d8fe2" opacity=".85"/><path d="M25.500 5.700L28.300 1.100L35.100 7.700L30.300 10.600" stroke="#3d8fe2" stroke-width="1.500" stroke-linejoin="round"/></svg>
<span class="t" style="left:1450.1px;top:150.4px;font-size:15px;color:#fff;transform:scaleX(0.9951);">Sensitivity</span>
<svg style="position:absolute;left:1478.8px;top:175.0px;" width="8.4" height="5.7" viewBox="0 0 8.4 5.7" fill="none"><path d="M1 1 L4.2 4.2 L7.4 1" stroke="#fff" stroke-width="1.3" stroke-linecap="round" stroke-linejoin="round"/></svg>
<span class="t" style="left:1454.22px;top:204.0px;font-size:13px;color:#fff;transform:scaleX(0.9745);">Sensitivity</span>
<div style="position:absolute;left:1529px;top:104px;width:1px;height:111px;background:#4a4a4a"></div>
<svg style="position:absolute;left:1551px;top:107px;" width="37" height="38" viewBox="0 0 37 38" fill="none"><rect x="1.300" y="2.300" width="33.600" height="33.300" stroke="#cf4527" stroke-width="1.800"/><rect x="5" y="6.300" width="11" height="10.500" stroke="#cf4527" stroke-width="1.500"/><rect x="20" y="6.300" width="11" height="10.500" stroke="#cf4527" stroke-width="1.500"/><rect x="5" y="20.700" width="11" height="10.900" stroke="#cf4527" stroke-width="1.500"/><rect x="20" y="20.700" width="11" height="10.900" stroke="#cf4527" stroke-width="1.500"/></svg>
<span class="t" style="left:1543.1px;top:150.4px;font-size:15px;color:#fff;transform:scaleX(1.0264);">Add-ins</span>
<span class="t" style="left:1545.02px;top:204.0px;font-size:13px;color:#fff;transform:scaleX(1.0150);">Add-ins</span>
<div style="position:absolute;left:1607px;top:104px;width:1px;height:111px;background:#4a4a4a"></div>
<svg style="position:absolute;left:1642px;top:105px;" width="40" height="37" viewBox="0 0 40 37" fill="none"><path d="M20.500 8.200H2.200V34.200H35.800V23" stroke="#7c7c7c" stroke-width="2.200"/><path d="M3 16H30 M18.800 16V34" stroke="#7c7c7c" stroke-width="1.600"/><path d="M28.400 .6C29.300 5.800 30.500 7 35.700 7.900C30.500 8.800 29.300 10 28.400 15.200C27.500 10 26.300 8.800 21.100 7.900C26.300 7 27.500 5.800 28.400 .6Z" fill="#8a8a8a"/><path d="M35.400 13.600C35.900 16.300 36.500 16.900 39.200 17.400C36.500 17.900 35.900 18.500 35.400 21.200C34.900 18.500 34.300 17.900 31.600 17.400C34.300 16.900 34.900 16.300 35.400 13.600Z" fill="#8a8a8a"/></svg>
<span class="t" style="left:1637.6px;top:150.4px;font-size:15px;color:#6f6f6f;">Design</span>
<span class="t" style="left:1620.1px;top:170.4px;font-size:15px;color:#6f6f6f;transform:scaleX(0.9835);">Suggestions</span>
<span class="t" style="left:1708.1px;top:150.4px;font-size:15px;color:#fff;transform:scaleX(1.0749);">Copilot</span>
<span class="t" style="left:1666.22px;top:204.0px;font-size:13px;color:#fff;transform:scaleX(1.0635);">Copilot</span>
<div style="position:absolute;left:1770px;top:104px;width:1px;height:111px;background:#4a4a4a"></div>
<svg style="position:absolute;left:1885px;top:200.5px;" width="13" height="8" viewBox="0 0 13 8" fill="none"><path d="M1 1L6.500 6.500L12 1" stroke="#fff" stroke-width="1.400" stroke-linecap="round" stroke-linejoin="round"/></svg>
<svg style="position:absolute;left:1714.5px;top:108.3px;" width="37" height="35" viewBox="0 0 37 35" fill="none"><defs>
<linearGradient id="cgl" x1="0" y1="0" x2="0" y2="1"><stop offset="0" stop-color="#5aa5e6"/><stop offset=".38" stop-color="#3f86c6"/><stop offset=".5" stop-color="#58b06a"/><stop offset=".68" stop-color="#8fd04e"/><stop offset=".8" stop-color="#f0952a"/><stop offset="1" stop-color="#f09a2a"/></linearGradient>
<linearGradient id="cgr" x1="0" y1="0" x2="0" y2="1"><stop offset="0" stop-color="#c655d6"/><stop offset=".35" stop-color="#c257cf"/><stop offset=".5" stop-color="#ea7387"/><stop offset=".78" stop-color="#ea7a80"/><stop offset="1" stop-color="#eda04e"/></linearGradient></defs>
<path d="M8.500 .8H24.500Q26 .8 26.600 2.200L29.300 8.200Q30 9.800 32 10H33.500L18 11Z" fill="#0d66bd"/>
<path d="M29 8.800Q30 10.300 33 10.300L30 11.500Z" fill="#4aa0e8"/>
<path d="M8.800 .8H22L19.200 3.600Q18 4.800 18 6.600V10.800L13.800 24.300Q13.600 25 12.800 25H4.800Q3.200 25 2.200 23.600L.8 21.600Q.2 20.700 .5 19.600L4.500 4Q5.300 .8 8.800 .8Z" fill="url(#cgl)"/>
<path d="M8.300 25H18.800L16.500 34.300H15.800Q12.800 34.300 11.600 31.800Z" fill="#e2512f"/>
<path d="M24.800 10.800H33.500Q37 10.800 36.300 14.500L33.700 27Q32.300 34.300 25.500 34.500H16.200L18.800 25.900Z" fill="url(#cgr)"/>
<path d="M18.400 11H22.900L18.900 24.300H14.300Z" fill="#292929"/></svg>
<svg style="position:absolute;left:18.8px;top:245.8px;" width="9" height="12" viewBox="0 0 9 12" fill="none"><path d="M1.600 1.500L7 6L1.600 10.500" stroke="#e0e0e0" stroke-width="2" stroke-linecap="round" stroke-linejoin="round"/></svg>
<span class="t" style="left:15px;top:351.3px;font-size:15px;color:#fff;transform-origin:0 0;transform:rotate(-90deg) scaleX(.98);">Thumbnails</span>
<div style="position:absolute;left:50px;top:226px;width:1px;height:884px;background:#3a3a3a"></div>
<div style="position:absolute;left:51px;top:1109.7px;width:1342px;height:1.2px;background:#454545"></div>
<div style="position:absolute;left:72px;top:255px;width:39.6px;height:39.6px;box-sizing:border-box;border:1px solid #4c4c4c;border-radius:8.5px;background:#272727"></div>
<svg style="position:absolute;left:82px;top:265px;" width="20" height="20" viewBox="0 0 20 20" fill="none"><path d="M10.600 .8C11.300 4.800 12.200 5.700 16.200 6.400C12.200 7.100 11.300 8 10.600 12C9.900 8 9 7.100 5 6.400C9 5.700 9.900 4.800 10.600 .8Z" fill="#fff"/>
<path d="M16.300 9.300C16.700 11.500 17.200 12 19.400 12.400C17.200 12.800 16.700 13.300 16.300 15.500C15.900 13.300 15.400 12.800 13.200 12.400C15.400 12 15.900 11.500 16.300 9.300Z" fill="#fff"/>
<path d="M1.300 12.300L5.300 8.500 M1.300 16L8 9.700 M3.800 17.500L9.300 12.300 M7.300 18.800L10.500 15.800" stroke="#fff" stroke-width="1.300" stroke-linecap="round"/></svg>
<div style="position:absolute;left:71.5px;top:304px;width:1281px;height:724px;background:linear-gradient(#ededed 0,#ededed 625px,#eaeaea 665px,#e2e2e2 706.5px,#fff 707px,#fff 100%)"></div>
<span class="t" style="left:180px;top:352.3px;font-size:71px;color:#76c043;transform:scaleX(1.0209);">Teamwork as a challenge in itself</span>
<div style="position:absolute;left:149.7px;top:511.3px;width:8.6px;height:8.6px;border-radius:50%;background:#76c043"></div>
<span class="t" style="left:198px;top:504.2px;font-size:25.5px;color:#4a4a4a;transform:scaleX(1.1040);">What is the right team composition?</span>
<div style="position:absolute;left:149.7px;top:590.3px;width:8.6px;height:8.6px;border-radius:50%;background:#76c043"></div>
<span class="t" style="left:196.2px;top:583.2px;font-size:25.5px;color:#4a4a4a;transform:scaleX(1.0936);">How do you ensure that everyone feels like part of the team?</span>
<div style="position:absolute;left:149.7px;top:668.8px;width:8.6px;height:8.6px;border-radius:50%;background:#76c043"></div>
<span class="t" style="left:196.2px;top:661.8px;font-size:25.5px;color:#4a4a4a;transform:scaleX(1.0952);">How do you easily share out information?</span>
<div style="position:absolute;left:149.7px;top:747.3px;width:8.6px;height:8.6px;border-radius:50%;background:#76c043"></div>
<span class="t" style="left:198px;top:741.0px;font-size:25.5px;color:#4a4a4a;transform:scaleX(1.0925);">What’s the best way to inspire a team to rise to a particularly tricky challenge?</span>
<div style="position:absolute;left:149.7px;top:826.3px;width:8.6px;height:8.6px;border-radius:50%;background:#76c043"></div>
<span class="t" style="left:198px;top:820.0px;font-size:25.5px;color:#4a4a4a;transform:scaleX(1.0873);">What are the conditions that will set a team up for success?</span>
<div style="position:absolute;left:149.7px;top:905.3px;width:8.6px;height:8.6px;border-radius:50%;background:#76c043"></div>
<span class="t" style="left:198px;top:899.0px;font-size:25.5px;color:#4a4a4a;transform:scaleX(1.0927);">What to do when a team encounters interpersonal tensions?</span>
<svg style="position:absolute;left:1060px;top:969px;" width="260" height="44" viewBox="0 0 260 44" fill="none"><defs><filter id="tb" x="-20%" y="-50%" width="140%" height="200%"><feGaussianBlur stdDeviation="7"/></filter><clipPath id="tc"><rect x="-30" y="0" width="320" height="42.500"/></clipPath></defs>
<g clip-path="url(#tc)"><path d="M10 46C34 44 34 38 37 26L38.500 19C39 12 42 10 48 10H229C235 10 238 12 238.500 19L240 26C243 38 243 44 267 46Z" fill="#c4c4c4" filter="url(#tb)"/></g>
<path d="M20 42.500C34 42.500 36 40 37.500 29L38.500 21C39 16 41 14 46 14H231C236 14 238 16 238.500 21L239.500 29C241 40 243 42.500 257 42.500Z" fill="#fff"/><rect x="14" y="42" width="249" height="2.500" fill="#fff"/></svg>
<span class="t" style="left:1112.73px;top:992.8px;font-size:19.5px;color:#424242;"><b>© 2020</b> Solu Digital</span>
<div style="position:absolute;left:1371px;top:223.3px;width:20.7px;height:819.3px;background:#141414;border-radius:10px"></div>
<svg style="position:absolute;left:1375.6px;top:228px;" width="12" height="9" viewBox="0 0 12 9" fill="none"><path d="M6 1L10.800 7.800H1.200Z" fill="#9d9d9d" stroke="#9d9d9d" stroke-width="1.200" stroke-linejoin="round"/></svg>
<div style="position:absolute;left:1375.9px;top:589.9px;width:11.1px;height:86.2px;background:#9b9b9b;border-radius:5.5px"></div>
<svg style="position:absolute;left:1375.6px;top:1029.3px;" width="12" height="9" viewBox="0 0 12 9" fill="none"><path d="M6 8L10.800 1.200H1.200Z" fill="#9d9d9d" stroke="#9d9d9d" stroke-width="1.200" stroke-linejoin="round"/></svg>
<svg style="position:absolute;left:1375.1px;top:1045.5px;" width="13" height="16" viewBox="0 0 13 16" fill="none"><path d="M6.500 .8L11.800 8.500H1.200Z M6.500 7.300L12.300 15H.7Z" fill="#9d9d9d" stroke="#9d9d9d" stroke-width=".8" stroke-linejoin="round"/></svg>
<svg style="position:absolute;left:1375.1px;top:1066.8px;" width="13" height="16" viewBox="0 0 13 16" fill="none"><path d="M6.500 15.200L11.800 7.500H1.200Z M6.500 8.700L12.300 1H.7Z" fill="#9d9d9d" stroke="#9d9d9d" stroke-width=".8" stroke-linejoin="round"/></svg>
<div style="position:absolute;left:1392px;top:223.5px;width:1px;height:887px;background:#4a4a4a"></div>
<div style="position:absolute;left:1393px;top:222px;width:520px;height:891px;background:#1c1c1c"></div>
<div style="position:absolute;left:1407.5px;top:238.5px;width:496.5px;height:857px;background:#fafafa"></div>
<svg style="position:absolute;left:1445px;top:264px;" width="21" height="15" viewBox="0 0 21 15" fill="none"><path d="M1 1.500H20 M1 7.500H15 M1 13.500H11" stroke="#424242" stroke-width="1.300" stroke-linecap="round"/></svg>
<svg style="position:absolute;left:1486.5px;top:261.5px;" width="19" height="20" viewBox="0 0 19 20" fill="none"><path d="M9.500 1C11.800 2.800 14.500 3.600 17.700 3.700V9.500C17.700 14 14.500 17.200 9.500 19C4.500 17.200 1.300 14 1.300 9.500V3.700C4.500 3.600 7.200 2.800 9.500 1Z" stroke="#107c10" stroke-width="1.500" stroke-linejoin="round"/><path d="M6 10L8.600 12.600L13.200 7.600" stroke="#107c10" stroke-width="1.500" stroke-linecap="round" stroke-linejoin="round"/></svg>
<div style="position:absolute;left:1597.3px;top:252.3px;width:79.2px;height:38.7px;box-sizing:border-box;border:1px solid #d1d1d1;border-radius:8px;background:#f5f5f5"></div>
<div style="position:absolute;left:1598.3px;top:253.3px;width:39px;height:36.7px;background:#fff;border-radius:7px 0 0 7px;border-right:1px solid #d6d6d6"></div>
<svg style="position:absolute;left:1606.5px;top:261px;" width="22" height="20" viewBox="0 0 22 20" fill="none"><path d="M7.500 4.500V3A1.500 1.500 0 0 1 9 1.500H13A1.500 1.500 0 0 1 14.500 3V4.500" stroke="#c43e1c" stroke-width="1.700"/><path d="M1 7A2.500 2.500 0 0 1 3.500 4.500H18.500A2.500 2.500 0 0 1 21 7V11.200H13V10.200H9V11.200H1Z" fill="#c43e1c"/><path d="M1 12.500H9V13.500H13V12.500H21V16.500A2.500 2.500 0 0 1 18.500 19H3.500A2.500 2.500 0 0 1 1 16.500Z" fill="#c43e1c"/></svg>
<svg style="position:absolute;left:1646px;top:261px;" width="21" height="21" viewBox="0 0 21 21" fill="none"><circle cx="10.500" cy="10.500" r="9.300" stroke="#424242" stroke-width="1.300"/><ellipse cx="10.500" cy="10.500" rx="4.300" ry="9.300" stroke="#424242" stroke-width="1.300"/><path d="M2 7.300H19 M2 13.700H19" stroke="#424242" stroke-width="1.300"/></svg>
<div style="position:absolute;left:1757.5px;top:254px;width:35.5px;height:35px;background:#c73d1b;border-radius:8px"></div>
<svg style="position:absolute;left:1766px;top:262px;" width="19" height="19" viewBox="0 0 19 19" fill="none"><path d="M9 3H4.500A2.500 2.500 0 0 0 2 5.500V14.500A2.500 2.500 0 0 0 4.500 17H13.500A2.500 2.500 0 0 0 16 14.500V10" stroke="#fff" stroke-width="1.500" stroke-linecap="round"/><path d="M16.800 1.800L8.500 10.100L8 11.500L9.400 11L17.700 2.700" stroke="#fff" stroke-width="1.500" stroke-linecap="round" stroke-linejoin="round"/></svg>
<svg style="position:absolute;left:1814px;top:269.5px;" width="17" height="4" viewBox="0 0 17 4" fill="none"><circle cx="2" cy="2" r="1.400" fill="#424242"/><circle cx="8.500" cy="2" r="1.400" fill="#424242"/><circle cx="15" cy="2" r="1.400" fill="#424242"/></svg>
<svg style="position:absolute;left:1865px;top:264px;" width="15" height="15" viewBox="0 0 15 15" fill="none"><path d="M.8 .8L14.200 14.200 M14.200 .8L.8 14.200" stroke="#333" stroke-width="1.400" stroke-linecap="round"/></svg>
<div style="position:absolute;left:1434.2px;top:335.8px;width:431.5px;height:72.2px;background:#f4f4f4;border-radius:9px"></div>
<span class="t" style="left:1454.01px;top:351.2px;font-size:16.5px;color:#242424;transform:scaleX(1.0707);">Suggest icons and layout for the content of this</span>
<span class="t" style="left:1454.01px;top:376.2px;font-size:16.5px;color:#242424;transform:scaleX(1.0849);">slide</span>
<svg style="position:absolute;left:1435px;top:439.8px;" width="24" height="22" viewBox="0 0 24 22" fill="none"><path d="M6.200 .7H14Q15.600 .7 15.100 2.200L10.400 13.800Q9.900 15.100 8.500 15.100H2.400Q.3 15.100 .8 13L3.600 2.800Q4.200 .7 6.200 .7Z M14.600 5.800H20.800Q23.200 5.800 22.600 7.900L19.600 18.300Q19 20.400 17 20.400H9Q7.300 20.400 7.900 18.900L12.600 7.200Q13.100 5.800 14.600 5.800Z M14.800 1Q16 1.500 16.400 2.800L17.300 5.600 M8.200 20.200Q7 19.700 6.600 18.400L5.700 15.300" stroke="#333" stroke-width="1.350" stroke-linejoin="round" stroke-linecap="round"/></svg>
<span class="t" style="left:1463.68px;top:443.2px;font-size:17px;color:#242424;transform:scaleX(1.0053);"><span class="sc">Copilot</span></span>
<span class="t" style="left:1433.61px;top:469.8px;font-size:16.5px;color:#242424;transform:scaleX(1.0255);">Great slide to visualise. Slide 5 is about <span class="sc">questions and</span></span>
<span class="t" style="left:1433.61px;top:494.8px;font-size:16.5px;color:#242424;transform:scaleX(1.0478);"><span class="sc">challenges</span>, so the layout should <i>signal complexity</i></span>
<span class="t" style="left:1433.61px;top:519.8px;font-size:16.5px;color:#242424;transform:scaleX(1.0503);"><i>without feeling messy.</i></span>
<span class="t" style="left:1433.61px;top:551.8px;font-size:16.5px;color:#242424;transform:scaleX(1.0208);">Below is a <span class="sc">clean, executive-friendly icon + layout</span></span>
<span class="t" style="left:1433.61px;top:576.8px;font-size:16.5px;color:#242424;transform:scaleX(1.0549);"><span class="sc">concept</span> that works well in PowerPoint and fits with the</span>
<span class="t" style="left:1433.61px;top:601.8px;font-size:16.5px;color:#242424;transform:scaleX(1.0566);">rest of your deck.</span>
<div style="position:absolute;left:1434.5px;top:657px;width:431px;height:1px;background:#e0e0e0"></div>
<span class="t" style="left:1433.13px;top:698.8px;font-size:24.5px;color:#242424;transform:scaleX(0.9553);"><span class="sb">Recommended layout for Slide 5</span></span>
<span class="t" style="left:1433.61px;top:736.0px;font-size:16.5px;color:#242424;transform:scaleX(1.0040);"><span class="sc">“Teamwork as a challenge in itself”</span></span>
<span class="t" style="left:1433.37px;top:773.8px;font-size:20.5px;color:#242424;transform:scaleX(1.0550);"><span class="sb">Overall structure (best option)</span></span>
<span class="t" style="left:1433.61px;top:806.0px;font-size:16.5px;color:#242424;transform:scaleX(1.0228);"><span class="sc">Centered title + 6 challenge cards</span></span>
<div style="position:absolute;left:1433.8px;top:853.2px;width:432px;height:100px;box-sizing:border-box;border:1px solid #d4d4d4;border-radius:4px;background:#fcfcfc"></div>
<span class="t m" style="left:1464.98px;top:889.5px;font-size:17px;color:#333;transform:scaleX(1.0058);">[ Title ]</span>
<div style="position:absolute;left:1408px;top:948.5px;width:495.5px;height:147px;background:#fafafa"></div>
<div style="position:absolute;left:1447.3px;top:950.2px;width:418.2px;height:103.5px;box-sizing:border-box;border:1px solid #e0e0e0;border-bottom-color:#bcbcbc;border-radius:17px;background:#fff;box-shadow:0 1px 2px rgba(0,0,0,.08)"></div>
<span class="t" style="left:1467.51px;top:969.2px;font-size:16.5px;color:#707070;transform:scaleX(1.0563);">Message Copilot</span>
<svg style="position:absolute;left:1471px;top:1014.5px;" width="19" height="19" viewBox="0 0 19 19" fill="none"><path d="M9.500 1V18 M1 9.500H18" stroke="#333" stroke-width="1.400" stroke-linecap="round"/></svg>
<svg style="position:absolute;left:1770.5px;top:1013.5px;" width="14" height="20" viewBox="0 0 14 20" fill="none"><rect x="4" y="1" width="6" height="11" rx="3" stroke="#333" stroke-width="1.300"/><path d="M1.300 9A5.700 5.700 0 0 0 12.700 9 M7 15V18.500" stroke="#333" stroke-width="1.300" stroke-linecap="round"/></svg>
<svg style="position:absolute;left:1816px;top:1014.5px;" width="19" height="19" viewBox="0 0 19 19" fill="none"><path d="M1.500 8.300V10.700 M5.500 5.500V13.500 M9.500 1V18 M13.500 5.500V13.500 M17.500 8.300V10.700" stroke="#333" stroke-width="1.300" stroke-linecap="round"/></svg>
<span class="t" style="left:1527.96px;top:1071.0px;font-size:14px;color:#616161;transform:scaleX(1.0805);">AI-generated content may be incorrect</span>
<div style="position:absolute;left:0px;top:1113px;width:1913px;height:27px;background:#161616;border-top:1px solid #2e2e2e;box-sizing:border-box"></div>
<span class="t" style="left:13.69px;top:1120.8px;font-size:13.5px;color:#f0f0f0;">Slide 5 of 9</span>
<svg style="position:absolute;left:105.5px;top:1119px;" width="19" height="17" viewBox="0 0 19 17" fill="none"><path d="M9 3.500C7 1.800 4 1.500 1 2V13.500C4 13 7 13.300 9 15V3.500C11 1.800 14 1.500 17 2V7" stroke="#f0f0f0" stroke-width="1.300" stroke-linejoin="round"/><path d="M10.500 12.500L13 15L18 9.500" stroke="#f0f0f0" stroke-width="1.300" stroke-linecap="round" stroke-linejoin="round"/></svg>
<span class="t" style="left:144.19px;top:1120.8px;font-size:13.5px;color:#f0f0f0;transform:scaleX(0.9493);">English (United States)</span>
<svg style="position:absolute;left:296.5px;top:1117.5px;" width="20" height="19" viewBox="0 0 20 19" fill="none"><circle cx="8.500" cy="2.800" r="1.800" stroke="#f0f0f0" stroke-width="1.200"/><path d="M1.500 5.500C5 7 12 7 15.500 5.500 M6 7V11.500L3.500 17.500 M11 7V10" stroke="#f0f0f0" stroke-width="1.300" stroke-linecap="round" stroke-linejoin="round"/><path d="M9.500 14L12.500 17L18.500 10.500" stroke="#f0f0f0" stroke-width="1.400" stroke-linecap="round" stroke-linejoin="round"/></svg>
<span class="t" style="left:318.99px;top:1120.8px;font-size:13.5px;color:#f0f0f0;transform:scaleX(0.9794);">Accessibility: Good to go</span>
<svg style="position:absolute;left:1245.5px;top:1117.7px;" width="21" height="20" viewBox="0 0 21 20" fill="none"><path d="M7.500 4.200L10.500 1.200L13.500 4.200" stroke="#f0f0f0" stroke-width="1.200" stroke-linecap="round" stroke-linejoin="round"/><path d="M1 10.600H20.500 M1 14.600H20.500 M1 18.600H20.500" stroke="#f0f0f0" stroke-width="1.300"/></svg>
<span class="t" style="left:1267.19px;top:1120.8px;font-size:13.5px;color:#f0f0f0;transform:scaleX(1.0085);">Notes</span>
<svg style="position:absolute;left:1324.5px;top:1118.5px;" width="22" height="19" viewBox="0 0 22 19" fill="none"><path d="M8.500 11H1.500V1.500H17.500V6" stroke="#f0f0f0" stroke-width="1.400"/><path d="M5.500 14.500H9" stroke="#f0f0f0" stroke-width="1.300"/><circle cx="15" cy="12.300" r="3.700" stroke="#f0f0f0" stroke-width="2" stroke-dasharray="1.500 1.400"/><circle cx="15" cy="12.300" r="2.500" stroke="#f0f0f0" stroke-width="1.300" fill="#161616"/></svg>
<span class="t" style="left:1345.19px;top:1120.8px;font-size:13.5px;color:#f0f0f0;transform:scaleX(0.9668);">Display Settings</span>
<div style="position:absolute;left:1463px;top:1114px;width:50.5px;height:26px;background:#282828"></div>
<svg style="position:absolute;left:1478px;top:1118.5px;" width="20" height="17" viewBox="0 0 20 17" fill="none"><rect x="1.200" y="1.200" width="17.200" height="14.800" stroke="#f0f0f0" stroke-width="1.500"/><path d="M4.700 1.500V15.500" stroke="#f0f0f0" stroke-width="1.200"/><rect x="7.700" y="4.800" width="8.600" height="5.600" stroke="#f0f0f0" stroke-width="1.200"/></svg>
<svg style="position:absolute;left:1528px;top:1117.5px;" width="20" height="18" viewBox="0 0 20 18" fill="none"><rect x="1" y="1" width="6.500" height="5.500" stroke="#f0f0f0" stroke-width="1.400"/><rect x="12" y="1" width="6.500" height="5.500" stroke="#f0f0f0" stroke-width="1.400"/><rect x="1" y="11" width="6.500" height="5.500" stroke="#f0f0f0" stroke-width="1.400"/><rect x="12" y="11" width="6.500" height="5.500" stroke="#f0f0f0" stroke-width="1.400"/></svg>
<svg style="position:absolute;left:1577px;top:1118px;" width="20" height="17" viewBox="0 0 20 17" fill="none"><path d="M10 2.500C8 1 5 .8 1 1.300V14.300C5 13.800 8 14 10 15.500C12 14 15 13.800 19 14.300V1.300C15 .8 12 1 10 2.500ZM10 2.500V15.500" stroke="#f0f0f0" stroke-width="1.300" stroke-linejoin="round"/><path d="M3.500 4.500H7.500 M3.500 7.500H7.500 M3.500 10.500H7.500 M12.500 4.500H16.500 M12.500 7.500H16.500 M12.500 10.500H16.500" stroke="#f0f0f0" stroke-width=".9"/></svg>
<svg style="position:absolute;left:1629px;top:1118.5px;" width="17" height="17" viewBox="0 0 17 17" fill="none"><path d="M.5 1.200H16 M2.700 1.200V9.300H13.700V1.200 M8.200 9.300V15 M3.700 15.500H12.700" stroke="#f0f0f0" stroke-width="1.500"/></svg>
<svg style="position:absolute;left:1670px;top:1126.5px;" width="9" height="2" viewBox="0 0 9 2" fill="none"><path d="M0 1H9" stroke="#f0f0f0" stroke-width="1.200"/></svg>
<div style="position:absolute;left:1686px;top:1126.5px;width:124.5px;height:1px;background:#9a9a9a"></div>
<div style="position:absolute;left:1746.5px;top:1119.5px;width:5.5px;height:14px;background:#d0d0d0"></div>
<svg style="position:absolute;left:1816.5px;top:1122px;" width="10" height="10" viewBox="0 0 10 10" fill="none"><path d="M0 5H10 M5 0V10" stroke="#f0f0f0" stroke-width="1.200"/></svg>
<span class="t" style="left:1842.69px;top:1120.8px;font-size:13.5px;color:#f0f0f0;transform:scaleX(0.9425);">107 %</span>
<svg style="position:absolute;left:1894.5px;top:1118px;" width="19" height="18" viewBox="0 0 19 18" fill="none"><rect x="5" y="4.500" width="9" height="9" stroke="#f0f0f0" stroke-width="1.400"/><path d="M9.500 .5V3 M9.500 15V17.500 M.5 9H3 M16 9H18.500 M7.500 2L9.500 .3L11.500 2 M7.500 16L9.500 17.700L11.500 16 M2 7L.3 9L2 11 M17 7L18.700 9L17 11" stroke="#f0f0f0" stroke-width="1.100" stroke-linejoin="round"/></svg>
</body></html>
